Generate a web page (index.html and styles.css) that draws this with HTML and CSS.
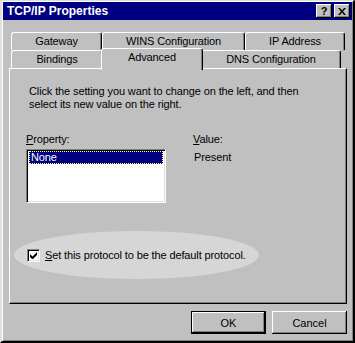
FILE: index.html
```html
<!DOCTYPE html>
<html lang="en">

<head>
    <meta charset="UTF-8">
    <title>TCP/IP Properties</title>
    <link rel="stylesheet" href="styles.css">
</head>

<body>
    <div class="window">
        <div class="titlebar">
            <span class="title">TCP/IP Properties</span>
            <div class="caption-buttons">
                <button class="cap">?</button>
                <button class="cap close">
                    <svg width="8" height="7" viewBox="0 0 8 7">
                        <path d="M0 0h2l2 2.5L6 0h2L5 3.5 8 7H6L4 4.5 2 7H0l3-3.5z" fill="#000" />
                    </svg>
                </button>
            </div>
        </div>
        <div class="dialog">
            <div class="tabs">
                <div class="tab-row">
                    <div class="tab w-gateway">Gateway</div>
                    <div class="tab w-wins">WINS Configuration</div>
                    <div class="tab w-ip">IP Address</div>
                </div>
                <div class="tab-row">
                    <div class="tab w-bindings">Bindings</div>
                    <div class="tab w-advanced selected">Advanced</div>
                    <div class="tab w-dns">DNS Configuration</div>
                </div>
            </div>
            <div class="panel">
                <p class="intro">Click the setting you want to change on the left, and then<br>select its new value on the right.</p>
                <div class="props">
                    <div class="prop-col">
                        <div class="label"><u>P</u>roperty:</div>
                        <div class="listbox">
                            <div class="item selected">None</div>
                        </div>
                    </div>
                    <div class="value-col">
                        <div class="label"><u>V</u>alue:</div>
                        <div class="value">Present</div>
                    </div>
                </div>
                <div class="default-row">
                    <span class="checkbox">
                        <svg width="7" height="7" viewBox="0 0 7 7">
                            <path d="M0 2v3l2 2h1l4-4V0L2.5 4.5z" fill="#000" />
                        </svg>
                    </span>
                    <span class="check-label"><u>S</u>et this protocol to be the default protocol.</span>
                </div>
            </div>
            <div class="buttons">
                <button class="btn default">OK</button>
                <button class="btn">Cancel</button>
            </div>
        </div>
    </div>
</body>

</html>
```

FILE: styles.css
```css
body {
    margin: 0;
    background: #c0c0c0;
    font-family: 'Liberation Sans', Arial, sans-serif;
    font-size: 11px;
    letter-spacing: -0.12px;
    color: #000;
}

.window {
    width: 355px;
    height: 343px;
    box-sizing: border-box;
    background: #c0c0c0;
    border-left: 2px solid #dfdfdf;
    border-top: 1px solid #dfdfdf;
    border-right: 2px solid #000;
    border-bottom: 2px solid #000;
    box-shadow: inset 1px 1px #fff, inset -1px -1px #808080;
    padding: 1px 1px 1px 1px;
}

.titlebar {
    height: 18px;
    background: #000080;
    color: #fff;
    display: flex;
    align-items: center;
    justify-content: space-between;
    padding: 0 2px 0 4px;
}

.title {
    font-weight: bold;
    font-size: 12px;
    letter-spacing: 0;
}

.caption-buttons {
    display: flex;
    gap: 2px;
}

.cap {
    width: 16px;
    height: 14px;
    padding: 0;
    margin: 0;
    background: #c0c0c0;
    border: none;
    box-shadow: inset -1px -1px #000, inset 1px 1px #fff, inset -2px -2px #808080;
    font-family: 'Liberation Sans', Arial, sans-serif;
    font-weight: bold;
    font-size: 11px;
    line-height: 13px;
    color: #000;
    display: flex;
    align-items: center;
    justify-content: center;
}

.dialog {
    padding: 12px 5px 0 6px;
}

.tabs {
    margin: 0 2px;
}

.tab-row {
    display: flex;
    height: 18px;
    align-items: flex-end;
}

.tab {
    height: 18px;
    box-sizing: border-box;
    background: #c0c0c0;
    border-left: 1px solid #fff;
    border-top: 1px solid #fff;
    border-right: 1px solid #000;
    border-radius: 3px 3px 0 0;
    box-shadow: inset -1px 0 #808080;
    display: flex;
    align-items: center;
    justify-content: center;
    padding-bottom: 1px;
}

.tab.selected {
    height: 22px;
    margin: 0 -2px -2px -2px;
    padding-bottom: 5px;
    position: relative;
    z-index: 1;
}

.w-gateway { width: 91px; }
.w-wins { width: 143px; }
.w-ip { width: 100px; }
.w-bindings { width: 92px; }
.w-advanced { width: 102px; }
.w-dns { width: 140px; }

.panel {
    height: 236px;
    box-sizing: border-box;
    border-left: 1px solid #fff;
    border-top: 1px solid #fff;
    border-right: 1px solid #000;
    border-bottom: 1px solid #000;
    box-shadow: inset -1px -1px #808080;
    padding: 16px 10px 0 15px;
}

.intro {
    margin: 0 0 0 4px;
    line-height: 13px;
}

.props {
    display: flex;
    margin-top: 22px;
}

.label {
    line-height: 13px;
    height: 16px;
}

.prop-col {
    width: 167px;
    margin-left: 1px;
}

.listbox {
    width: 140px;
    height: 54px;
    box-sizing: border-box;
    background: #fff;
    border-left: 1px solid #808080;
    border-top: 1px solid #808080;
    border-right: 1px solid #fff;
    border-bottom: 1px solid #fff;
    box-shadow: inset 1px 1px #000, inset -1px -1px #dfdfdf;
    padding: 1px 2px;
}

.item {
    height: 13px;
    line-height: 13px;
    padding-left: 2px;
}

.item.selected {
    background: #000080;
    color: #fff;
    outline: 1px dotted #ffff80;
    outline-offset: -1px;
}

.value {
    margin-top: 2px;
    margin-left: 1px;
    line-height: 13px;
}

.default-row {
    position: relative;
    display: flex;
    align-items: center;
    gap: 5px;
    margin-top: 46px;
    margin-left: 2px;
}

.default-row::before {
    content: "";
    position: absolute;
    left: -13px;
    top: -18px;
    width: 245px;
    height: 48px;
    border-radius: 50%;
    background: #d6d6d6;
}

.checkbox {
    position: relative;
    width: 13px;
    height: 13px;
    box-sizing: border-box;
    background: #fff;
    border-left: 1px solid #808080;
    border-top: 1px solid #808080;
    border-right: 1px solid #fff;
    border-bottom: 1px solid #fff;
    box-shadow: inset 1px 1px #000, inset -1px -1px #dfdfdf;
    display: flex;
    align-items: center;
    justify-content: center;
}

.check-label {
    position: relative;
    line-height: 13px;
}

.buttons {
    display: flex;
    justify-content: flex-end;
    gap: 6px;
    margin-top: 7px;
}

.btn {
    width: 75px;
    height: 23px;
    padding: 0;
    background: #c0c0c0;
    border: none;
    box-shadow: inset -1px -1px #000, inset 1px 1px #fff, inset -2px -2px #808080;
    font-family: 'Liberation Sans', Arial, sans-serif;
    font-size: 11px;
    color: #000;
}

.btn.default {
    border: 1px solid #000;
    box-shadow: inset -1px -1px #000, inset 1px 1px #fff, inset -2px -2px #808080;
}
```
